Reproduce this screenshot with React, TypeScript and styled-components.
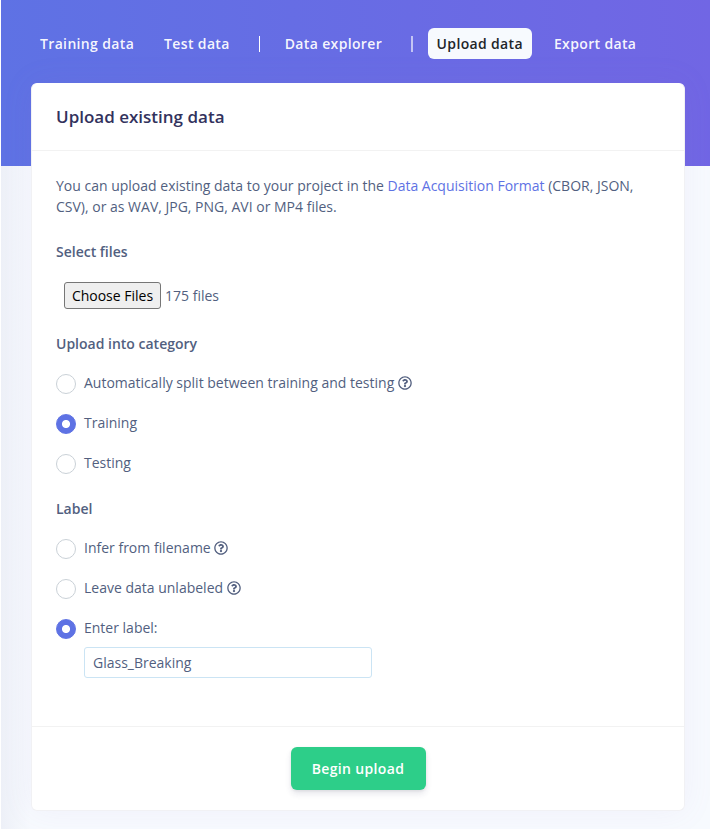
import React, { useState } from "react";
import styled, { createGlobalStyle, css } from "styled-components";

const GlobalStyle = createGlobalStyle`
  *, *::before, *::after { box-sizing: border-box; }
  body {
    margin: 0;
    background: #fff;
    color: #525f7f;
    font: 400 14px/21px "Open Sans", sans-serif;
  }
`;

const Page = styled.main`
  margin-left: 1px;
  height: 829px;
  padding: 0 25px 18px 30px;
  overflow: hidden;
  background:
    linear-gradient(90deg, rgba(136, 136, 180, 0.09), rgba(136, 136, 180, 0) 30px) 0 166px no-repeat,
    linear-gradient(87deg, #5e72e4 0, #7166e4 100%) 0 0 / 100% 166px no-repeat,
    #f7fafe;
`;

const Nav = styled.nav`
  display: flex;
  align-items: center;
  height: 83px;
  padding: 31px 0 27px;
`;

const NavLink = styled.a<{ $active?: boolean; $gap: number }>`
  height: 31px;
  padding: 5px 9px;
  margin-left: ${(p) => p.$gap}px;
  margin-top: -1px;
  border-radius: 6px;
  font-weight: 600;
  letter-spacing: 0.35px;
  white-space: nowrap;
  text-decoration: none;
  color: ${(p) => (p.$active ? "#212529" : "rgba(255, 255, 255, 0.95)")};
  background: ${(p) => (p.$active ? "#f7fafe" : "transparent")};
`;

const Divider = styled.span<{ $gap: number; $soft?: boolean }>`
  width: ${(p) => (p.$soft ? 2 : 1)}px;
  height: 16px;
  margin-left: ${(p) => p.$gap}px;
  background: ${(p) => (p.$soft ? "rgba(255, 255, 255, 0.6)" : "#fff")};
`;

const Card = styled.section`
  height: 728px;
  border: 1px solid #f1f1f4;
  border-top-color: #fff;
  border-radius: 6px;
  background: #fff;
  box-shadow: 0 0 32px rgba(150, 120, 210, 0.08);
  display: flex;
  flex-direction: column;
`;

const CardHeader = styled.header`
  height: 67px;
  padding: 20px 24px;
  border-bottom: 1px solid rgba(0, 0, 0, 0.05);
`;

const Title = styled.h1`
  margin: 0;
  font-size: 17px;
  line-height: 26px;
  font-weight: 600;
  color: #32325d;
`;

const CardBody = styled.div`
  flex: 1;
  padding: 24px 24px 0;
`;

const Intro = styled.p`
  margin: 0 0 24px;
`;

const Link = styled.a`
  color: #5e72e4;
  text-decoration: none;
`;

const GroupTitle = styled.h2`
  margin: 0;
  font-size: 14px;
  line-height: 21px;
  font-weight: 600;
`;

const FilePicker = styled.div`
  display: flex;
  align-items: center;
  gap: 4px;
  margin: 20px 0 24px 8px;
`;

const FileButton = styled.button`
  width: 97px;
  height: 27px;
  padding: 1px 6px;
  border: 1px solid #767676;
  border-radius: 3px;
  background: #efefef;
  color: #000;
  font: inherit;
  white-space: nowrap;
`;

const Options = styled.div<{ $last?: boolean }>`
  display: grid;
  gap: 19px;
  margin: 18px 0 ${(p) => (p.$last ? 0 : 25)}px;
`;

const Option = styled.label`
  display: flex;
  align-items: flex-start;
  height: 21px;
  cursor: pointer;
`;

const Radio = styled.input`
  appearance: none;
  flex: none;
  width: 20px;
  height: 20px;
  margin: 2px 8px 0 0;
  border: 1px solid #cad1d7;
  border-radius: 50%;
  background: #fff;
  ${(p) =>
    p.checked &&
    css`
      border-color: #5e72e4;
      background: radial-gradient(circle, #fff 3.6px, #5e72e4 4.5px);
    `}
`;

const HelpSvg = styled.svg`
  width: 14px;
  height: 14px;
  margin: 4px 0 0 3.64px;
  fill: currentColor;
`;

const Help = () => (
  <HelpSvg viewBox="0 0 512 512" aria-hidden="true">
    <path d="M256 8C119.043 8 8 119.083 8 256c0 136.997 111.043 248 248 248s248-111.003 248-248C504 119.083 392.957 8 256 8zm0 448c-110.532 0-200-89.431-200-200 0-110.495 89.472-200 200-200 110.491 0 200 89.471 200 200 0 110.53-89.431 200-200 200zm107.244-255.2c0 67.052-72.421 68.084-72.421 92.863V300c0 6.627-5.373 12-12 12h-45.647c-6.627 0-12-5.373-12-12v-8.659c0-35.745 27.1-50.034 47.579-61.516 17.561-9.845 28.324-16.541 28.324-29.579 0-17.246-21.999-28.693-39.784-28.693-23.189 0-33.894 10.977-48.942 29.969-4.057 5.12-11.46 6.071-16.666 2.124l-27.824-21.098c-5.107-3.872-6.251-11.066-2.644-16.363C184.846 131.491 214.94 112 261.794 112c49.071 0 101.45 38.304 101.45 88.8zM298 368c0 23.159-18.841 42-42 42s-42-18.841-42-42 18.841-42 42-42 42 18.841 42 42z" />
  </HelpSvg>
);

const LabelInput = styled.input`
  display: block;
  width: 288px;
  height: 31px;
  margin: 9px 0 0 28px;
  padding: 0 8px;
  border: 1px solid #cbe4f4;
  border-radius: 3px;
  outline: none;
  background: #fff;
  color: #525f7f;
  font: inherit;
`;

const CardFooter = styled.footer`
  display: flex;
  justify-content: center;
  height: 84px;
  padding-top: 20px;
  border-top: 1px solid rgba(0, 0, 0, 0.05);
`;

const UploadButton = styled.button`
  width: 135px;
  height: 43px;
  padding: 0;
  border: 0;
  border-radius: 6px;
  background: #2dce89;
  color: #fff;
  font: 600 14px/21px "Open Sans", sans-serif;
  letter-spacing: 0.35px;
  box-shadow: 0 4px 6px rgba(50, 50, 93, 0.11), 0 1px 3px rgba(0, 0, 0, 0.08);
`;

const categories = [
  { id: "split", text: "Automatically split between training and testing", help: true },
  { id: "training", text: "Training" },
  { id: "testing", text: "Testing" },
];

const labelModes = [
  { id: "infer", text: "Infer from filename", help: true },
  { id: "none", text: "Leave data unlabeled", help: true },
  { id: "enter", text: "Enter label:" },
];

export default function App() {
  const [category, setCategory] = useState("training");
  const [mode, setMode] = useState("enter");
  const [label, setLabel] = useState("Glass_Breaking");

  return (
    <>
      <GlobalStyle />
      <Page>
        <Nav>
          <NavLink $gap={0}>Training data</NavLink>
          <NavLink $gap={12}>Test data</NavLink>
          <Divider $gap={20} />
          <NavLink $gap={16}>Data explorer</NavLink>
          <Divider $gap={19.5} $soft />
          <NavLink $gap={15} $active>Upload data</NavLink>
          <NavLink $gap={13}>Export data</NavLink>
        </Nav>
        <Card>
          <CardHeader>
            <Title>Upload existing data</Title>
          </CardHeader>
          <CardBody>
            <Intro>
              You can upload existing data to your project in the <Link>Data Acquisition Format</Link> (CBOR, JSON,
              CSV), or as WAV, JPG, PNG, AVI or MP4 files.
            </Intro>
            <GroupTitle>Select files</GroupTitle>
            <FilePicker>
              <FileButton type="button">Choose Files</FileButton>
              <span>175 files</span>
            </FilePicker>
            <GroupTitle>Upload into category</GroupTitle>
            <Options>
              {categories.map((o) => (
                <Option key={o.id}>
                  <Radio type="radio" name="category" checked={category === o.id} onChange={() => setCategory(o.id)} />
                  {o.text}
                  {o.help && <Help />}
                </Option>
              ))}
            </Options>
            <GroupTitle>Label</GroupTitle>
            <Options $last>
              {labelModes.map((o) => (
                <Option key={o.id}>
                  <Radio type="radio" name="label" checked={mode === o.id} onChange={() => setMode(o.id)} />
                  {o.text}
                  {o.help && <Help />}
                </Option>
              ))}
            </Options>
            <LabelInput value={label} onChange={(e) => setLabel(e.target.value)} />
          </CardBody>
          <CardFooter>
            <UploadButton type="button">Begin upload</UploadButton>
          </CardFooter>
        </Card>
      </Page>
    </>
  );
}
